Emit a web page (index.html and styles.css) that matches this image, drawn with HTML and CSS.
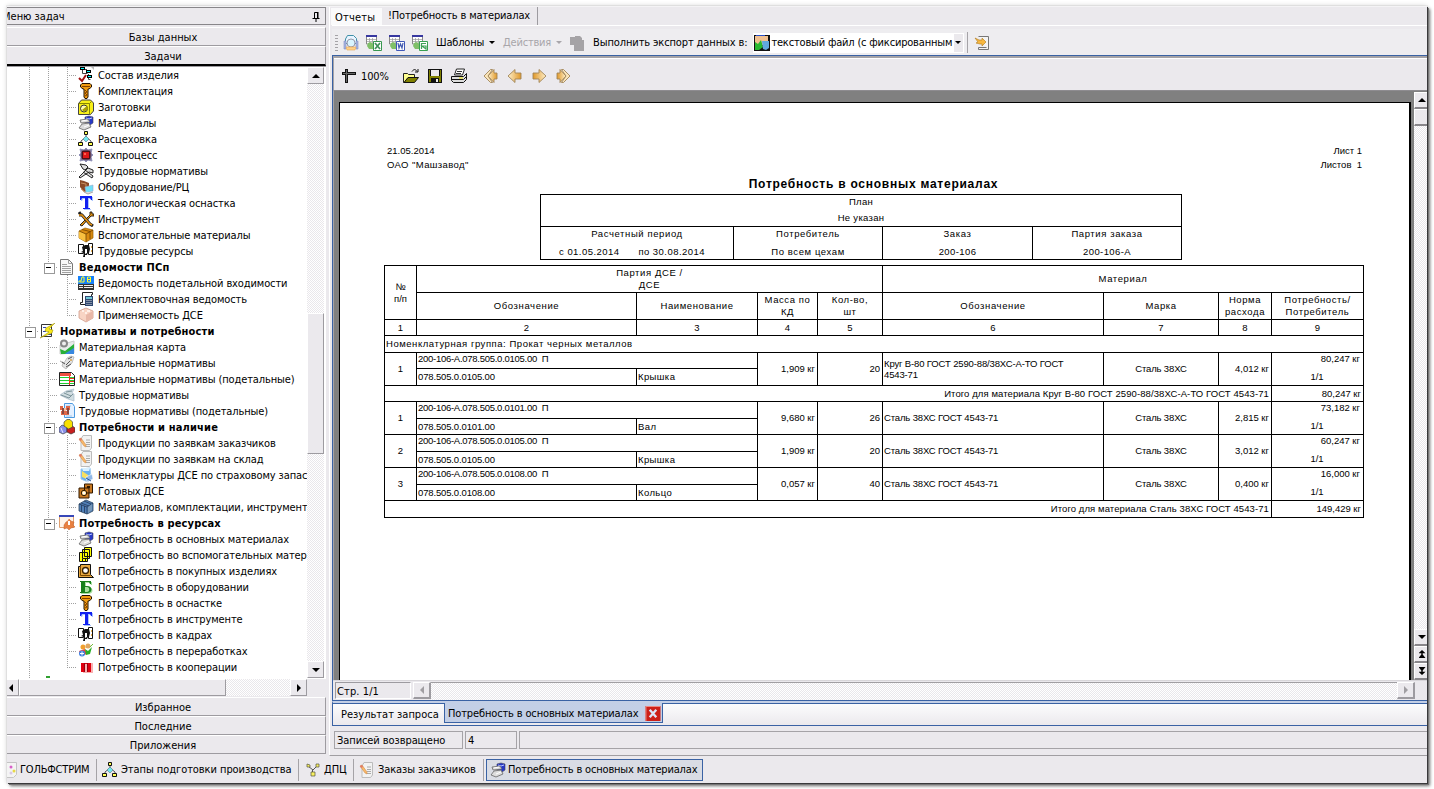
FILE: index.html
```html
<!DOCTYPE html>
<html lang="ru">
<head>
<meta charset="utf-8">
<title>Потребность в материалах</title>
<link rel="stylesheet" href="styles.css">
</head>
<body>
<svg class="sprite" xmlns="http://www.w3.org/2000/svg">
<symbol id="i-struct" viewBox="0 0 16 16"><path d="M4.500 3v3.500h5M10.500 7v5.500h2M6 2.500h3" stroke="#444" fill="none"/><path d="M2 0h5v3H2zM8 3h5v3H8zM9 8h5v3H9z" fill="#000"/><path d="M3 1h3v1H3zM9 4h3v1H9zM10 9h3v1h-3z" fill="#0ff"/><path d="M1 11l3 3 4-6" stroke="#a01010" stroke-width="2" fill="none"/><path d="M13 0h3v3z" fill="#bbb"/></symbol>
<symbol id="i-bolt" viewBox="0 0 16 16"><path d="M4 .5h8l1.500 1.500v2L11 6h-1v8l-1 1.500H7L6 14V6H5L2.500 4V2z" fill="#f09a10" stroke="#201000"/><path d="M4 3.500h8M7 7l2 2-2 1 2 2-2 1" stroke="#804000" fill="none"/></symbol>
<symbol id="i-nut" viewBox="0 0 16 16"><path d="M.5 4.500l3-3.500h9l3 3v8l-3 3.500h-12z" fill="#f8f018" stroke="#444"/><path d="M.5 4.500h11v11M11.500 4.500l2-2" stroke="#888800" fill="none"/><circle cx="6" cy="9.500" r="3.500" fill="#fffbb0" stroke="#333"/><path d="M4 11a3 3 0 0 0 5-4z" fill="#a8a000"/></symbol>
<symbol id="i-mat" viewBox="0 0 16 16"><path d="M7 2l4-1 4 1v6l-3 2-5-3z" fill="#2638c8" stroke="#445" stroke-width=".6"/><path d="M8 3l3 1 3-1" stroke="#b8c4ff" fill="none"/><path d="M2 5l8-1 2 3-9 1zM4 9l7-1 2 4-7 3-5-2z" fill="#ddd" stroke="#666" stroke-width=".8"/><path d="M4 6l5-1M6 12l5-2" stroke="#fff"/></symbol>
<symbol id="i-route" viewBox="0 0 16 16"><path d="M8 4v3M3 12v-2l5-4 5 4v2" stroke="#555" fill="none"/><path d="M6.500.5h3v3h-3zM.5 11.500h4v3h-4zM10.500 11.500h4v3h-4z" fill="#ffff50" stroke="#111"/><path d="M8 5l3 3-3 3-3-3z" fill="#70e8f0" stroke="#567" stroke-width=".5"/></symbol>
<symbol id="i-tech" viewBox="0 0 16 16"><path d="M8 1l2 2 4-1-1 4 2 2-2 2 1 4-4-1-2 2-2-2-4 1 1-4-2-2 2-2-1-4 4 1z" fill="#807898" stroke="#9090b8"/><rect x="3.500" y="3.500" width="9" height="9" rx="2" fill="#501018"/><rect x="5" y="5" width="6" height="6" fill="#e01818"/><rect x="6" y="6" width="2" height="2" fill="#ff6050"/></symbol>
<symbol id="i-hammer" viewBox="0 0 16 16"><path d="M2 1l6 1 2 2-3 3-2-1zM7 7l8 6-1 2-9-6M10 5l5 2v3l-4-1-9 6-1-1z" fill="#ddd" stroke="#111" stroke-width=".9"/></symbol>
<symbol id="i-equip" viewBox="0 0 16 16"><path d="M2 1l4 1 5 2v8l-5 1-4-5z" fill="#8a4a28"/><path d="M3 4l5 1v6M3 10l4 3" stroke="#c89060" fill="none"/><path d="M7 8l8-2v6l-7 2z" fill="#70e0f8" stroke="#9ac" stroke-width=".6"/><path d="M6 13l4 2 5-2" fill="#ddd" stroke="#aaa"/></symbol>
<symbol id="i-t" viewBox="0 0 16 16"><path d="M3 2v4h1l1-2h3v10H6v1h7v-1h-2V4h2l1 2h1V2z" fill="#a8c4ff"/><path d="M2 1v4h1l1-2h3v10H5v1h7v-1h-2V3h2l1 2h1V1z" fill="#1020f0"/></symbol>
<symbol id="i-tool" viewBox="0 0 16 16"><path d="M2 14L12 4V1h2v2h2v2h-3L4 15z" fill="#f09a10" stroke="#111" stroke-width=".9"/><path d="M1 1l2 3M1 4h3l8 9 3 2" stroke="#222" stroke-width="3" fill="none"/><path d="M1 4h3l8 9 2 1" stroke="#e59010" stroke-width="1.600" fill="none"/></symbol>
<symbol id="i-box" viewBox="0 0 16 16"><path d="M1 4l6-3 8 2v8l-7 4-7-4z" fill="#d88a10" stroke="#9a6000" stroke-width=".7"/><path d="M1 4l7 3v8l-7-4z" fill="#f8c040"/><path d="M1 4l7 3 7-4M8 7v8M4 2.500l8 2V12" stroke="#704000" stroke-width=".8" fill="none"/></symbol>
<symbol id="i-people" viewBox="0 0 16 16"><path d="M.5 1.500h5v9h-5zM10.500 .5h4v11h-4z" fill="#fff" stroke="#111"/><path d="M4 4l3-2h4l1 4-1 4-2 1 1 3H5l1-4-3-1 2-1z" fill="#111"/><path d="M7 6h2v4l-2 1zM7 12h3v2H7z" fill="#fff"/><path d="M13 3h1v2h-1zM13 7h1v2h-1z" fill="#e8b050"/></symbol>
<symbol id="i-doc" viewBox="0 0 16 16"><path d="M1.500.5h8l4 4v11h-12z" fill="#f8f8f8" stroke="#777"/><path d="M9.500.5v4h4M3 5.500h5M3 7.500h9M3 9.500h9M3 11.500h9M3 13.500h9" stroke="#a0a0a0" fill="none"/></symbol>
<symbol id="i-dv" viewBox="0 0 16 16"><path d="M0 1h16v8H0z" fill="#1680f8"/><path d="M2 7h4V2H4L3 6H1v1.500M9.500 2v5h3V2h-3m0 2.500h3" stroke="#ffff30" fill="none"/><path d="M0 9h16v6H0z" fill="#333"/><path d="M1 10.500h4M1 12.500h4M6 10.500h9M6 12.500h9" stroke="#eee"/></symbol>
<symbol id="i-calc" viewBox="0 0 16 16"><path d="M4.500 1.500h10v2h-1v10h-11v-2h2z" fill="#fff" stroke="#222"/><rect x="7" y="5" width="8" height="10" fill="#304870"/><path d="M8 6h6v2H8z" fill="#70c8d8"/><path d="M8.500 9.500h5M8.500 11.500h5M8.500 13.500h5" stroke="#ddd" stroke-dasharray="1 1"/></symbol>
<symbol id="i-brick" viewBox="0 0 16 16"><path d="M1 4l7-3 7 3v7l-7 4-7-4z" fill="#f8d4c4" stroke="#d09c8c" stroke-width=".8"/><path d="M8 8l7-4v7l-7 4z" fill="#e8b8a8"/><path d="M4 3h2v2H4zM9 3h3v2H9zM7 5h2v2H7z" fill="#fff0e8"/></symbol>
<symbol id="i-norm" viewBox="0 0 16 16"><path d="M1.500 1.500h10v12h-10z" fill="#fff" stroke="#333"/><path d="M3 4h3v1H3zM3 8h3v1H3zM8 8h3v1H8zM8 11h3v1H8z" fill="#3048b0"/><path d="M15 0L6 5l-1 3 4 1-9 6 12-5 1-3-4-1z" fill="#f8e818" stroke="#968a00" stroke-width=".5"/></symbol>
<symbol id="i-map" viewBox="0 0 16 16"><path d="M1 6l14-4v12L1 15z" fill="#e8ecea" stroke="#ccc"/><circle cx="5" cy="4.500" r="3" fill="#eee" stroke="#888" stroke-width="2"/><path d="M1 10l5 2 9-7v6l-6 4H2z" fill="#28b038"/><path d="M7 14l8-5v6H6z" fill="#3888e0"/></symbol>
<symbol id="i-sheets" viewBox="0 0 16 16"><path d="M1 6l4 2 3-5 4-2 3 1-2 6-6 6-4-3 1-3z" fill="#e4e4e4" stroke="#aaa" stroke-width=".7"/><path d="M3 7l3 2M9 4l4-2M7 10l4-4M7 12l5-3" stroke="#555"/><path d="M11 4h2v2h-2z" fill="#d8b070"/></symbol>
<symbol id="i-table" viewBox="0 0 16 16"><path d="M.5 1.500h12l3 3v10H.5z" fill="#fff" stroke="#222"/><path d="M1 2h11v3H1z" fill="#f05040"/><path d="M1 6.500h14M1 9.500h14M1 12.500h14" stroke="#20d030"/><path d="M10.500 5v9M11 7.500h4M11 10.500h4" stroke="#f03020"/></symbol>
<symbol id="i-sheaf" viewBox="0 0 16 16"><path d="M1 8l6-4 8-2-2 4 2 1v7l-6-2z" fill="#d0dce0" stroke="#abc" stroke-width=".7"/><path d="M2 8l8 3 4-4M5 6l7 3M7 5l6-1" stroke="#668088" stroke-width=".8" fill="none"/></symbol>
<symbol id="i-people2" viewBox="0 0 16 16"><path d="M5.500.5h8l2 3v11h-10z" fill="#e4f0ff" stroke="#4c9ae0"/><path d="M7 3h5M7 13h6" stroke="#9cc8f0"/><path d="M1 3h3v4H1zM7 3h4v4H7zM2 8h8v4H2z" fill="#e06848"/><path d="M3 5h2v6H3zM8 5h2v6H8z" fill="#884840"/><path d="M5 5h2v3H5z" fill="#f8c0a0"/></symbol>
<symbol id="i-cubes" viewBox="0 0 16 16"><path d="M0 9l3-3 5 2v5l-4 2-4-2z" fill="#8890e8" stroke="#444" stroke-width=".7"/><path d="M8 9l4-3 4 3v4l-4 2-4-2z" fill="#c82020" stroke="#333" stroke-width=".7"/><path d="M5 3l3-2.500h3L13.500 3v5l-4 2L5 7z" fill="#f8e000" stroke="#444" stroke-width=".7"/><path d="M2 9l2 5" stroke="#e0e4ff"/></symbol>
<symbol id="i-note" viewBox="0 0 16 16"><path d="M5 .5h8.500V13l-2 2.500H3V4z" fill="#f2f2f2" stroke="#bbb"/><path d="M8 5h4M8 7.500h4M8 9.500h4M8 11.500h4" stroke="#aaa"/><path d="M1 4l2-1 5 7v2l-2-1z" fill="#f8b868" stroke="#c88040" stroke-width=".5"/><path d="M1 4l2-1 1 2-2 1z" fill="#e07868"/></symbol>
<symbol id="i-pen" viewBox="0 0 16 16"><path d="M3 2l9-1 1 9-3 5-7-3z" fill="#68b0f0" stroke="#9cc8f0"/><path d="M4 1h8l-1 3H5z" fill="#d8f0ff"/><path d="M4 4l6 4 1 5-7-3z" fill="#f8e060"/><path d="M8 10l6-3 1 5-6 3z" fill="#90b8e8" stroke="#fff" stroke-width=".6"/><path d="M8 11l5 3" stroke="#2858a0"/></symbol>
<symbol id="i-ready" viewBox="0 0 16 16"><path d="M6.500 1h8v9h-8zM1 5h10v10H1z" fill="#c87820" stroke="#301800"/><circle cx="6" cy="10" r="2.700" fill="#ffe0a0" stroke="#301800"/><path d="M9 3h3v2H9z" fill="#301800"/><path d="M5 9h2v2H5z" fill="#fff"/></symbol>
<symbol id="i-bluebox" viewBox="0 0 16 16"><path d="M1 5l7-4 7 3v8l-6 3-8-3z" fill="#5080b8" stroke="#304860" stroke-width=".8"/><path d="M1 5l8 3 6-4M9 8v7M3.500 6v7M6.500 7v7M3 4l8 3M6 2l7 3" stroke="#243858" stroke-width=".8" fill="none"/><path d="M10 8l4-3v6l-4 3z" fill="#7898b8"/></symbol>
<symbol id="i-win" viewBox="0 0 16 16"><path d="M.5.5h14v12H.5z" fill="#fff4e8" stroke="#e0a070"/><path d="M0 0h15v2H0z" fill="#3848b8"/><path d="M5 10l2-3 2-1 1-2 2 2 3 1-1 3 2 2-4 1-2 2-2-2-3 1z" fill="#e88040" stroke="#c06030" stroke-width=".5"/><path d="M9 6h2v4H9z" fill="#fff"/></symbol>
<symbol id="i-copy" viewBox="0 0 16 16"><path d="M6.500.5h7v9h-7zM4.500 2.500h7v9h-7zM1.500 5.500h8v9h-8z" fill="#ffff00" stroke="#111"/><path d="M4 12h1v2H4zM7 12h1v2H7z" fill="#111"/></symbol>
<symbol id="i-buy" viewBox="0 0 16 16"><path d="M.5 3.500h2v-2h10v10l3 3H.5z" fill="#e8a840" stroke="#111"/><path d="M2.500 3v9.500h10" stroke="#7a4800" fill="none"/><circle cx="7.500" cy="7.500" r="3" fill="#fff" stroke="#382000" stroke-width="1.300"/></symbol>
<symbol id="i-b" viewBox="0 0 16 16"><path d="M3 3v1h1v10H3v1h7c6 0 6-7 0-7H8V4h4l1 2h1V3z" fill="#a8e0a0"/><path fill-rule="evenodd" d="M2 2v1h1v10H2v1h7c6 0 6-7 0-7H7V3h4l1 2h1V2zM7 8h2c3 0 3 5 0 5H7z" fill="#18801c"/></symbol>
<symbol id="i-rework" viewBox="0 0 16 16"><circle cx="5" cy="4" r="2.500" fill="#f0a030"/><circle cx="10" cy="3" r="2.500" fill="#e0a860"/><path d="M1 8l6-2 2 5-6 2z" fill="#f04040"/><path d="M7 6l3 2 4-4-2 7-4 1z" fill="#28b028"/><circle cx="4" cy="10.500" r="3" fill="#4080e0"/><path d="M2 10.500h4M4 8.500v4" stroke="#fff"/><path d="M12 4l3-3" stroke="#70c040"/></symbol>
<symbol id="i-p" viewBox="0 0 16 16"><path d="M5 4h10v10H5z" fill="#f8b0b0"/><path d="M3 4h10v9H9V5H7v8H3z" fill="#e00010"/><path d="M9 4h1v9H9zM6 4h1v9H6z" fill="#980010"/></symbol>
<symbol id="i-preview" viewBox="0 0 16 16"><path d="M4.500.5h6l3 3v5h-11V4z" fill="#e8f4ff" stroke="#4090a8"/><path d="M1 6h2v8H1zM13 6h2v8h-2z" fill="#a8b4e0" stroke="#8090c8" stroke-width=".6"/><circle cx="8" cy="8" r="4" fill="#d8f4ff" stroke="#99a"/><path d="M3 12h10l-1 3H4z" fill="#ffd088" stroke="#e8a850" stroke-width=".6"/></symbol>
<symbol id="i-exp" viewBox="0 0 16 16"><path d="M.5 1h10v8H.5z" fill="#fff" stroke="#888"/><path d="M0 0h11v2H0z" fill="#3838a0"/><path d="M1 4.500h9M1 6.500h9M3.500 3v6M6.500 3v6" stroke="#999" stroke-width=".7"/><path d="M2 8l3-1 3 3-1 4H3l-2-3z" fill="#80c068"/></symbol>
<symbol id="i-xl" viewBox="0 0 16 16"><use href="#i-exp"/><path d="M7.500 6.500h8v9h-8z" fill="#fff" stroke="#389850"/><path d="M9 8l5 6M14 8l-5 6" stroke="#40905a" stroke-width="1.700"/></symbol>
<symbol id="i-wd" viewBox="0 0 16 16"><use href="#i-exp"/><path d="M7.500 6.500h8v9h-8z" fill="#fff" stroke="#4058b8"/><path d="M9 8l1 5 1.500-4 1.500 4 1-5" stroke="#4058b0" stroke-width="1.200" fill="none"/></symbol>
<symbol id="i-gf" viewBox="0 0 16 16"><use href="#i-exp"/><path d="M7.500 6.500h8v9h-8z" fill="#fff" stroke="#38a050"/><path d="M9.500 14V8.500H14M10 11l4 3v-3z" stroke="#40a058" stroke-width="1.200" fill="none"/></symbol>
<symbol id="i-off" viewBox="0 0 16 16"><path d="M1 2h5V1h5l2 2v2h2v11H5v-6H1z" fill="#a5a3a6"/></symbol>
<symbol id="i-pic" viewBox="0 0 16 16"><path d="M0 0h16v16H0z" fill="#111"/><path d="M1 1h13v9H1z" fill="#f0c090"/><path d="M2 0h9v1H2z" fill="#2850c8"/><path d="M1 7l3 2 3-4 2 7-4 3H1z" fill="#28b830"/><path d="M8 6h7v7l-3 2-3-1z" fill="#60a8e0"/></symbol>
<symbol id="i-go" viewBox="0 0 16 16"><path d="M4.500 1.500h10v13h-10v-2h8" fill="#f4f4f4" stroke="#777"/><path d="M1 3l4 2h3V3l4 4-4 4V9H6L2 8l2-1z" fill="#f8b840" stroke="#b07818" stroke-width=".6"/></symbol>
<symbol id="i-cross" viewBox="0 0 16 16"><path d="M4 1h3v14H4zM1 4h14v3H1z" fill="#111"/><path d="M5 2h1v12H5zM2 5h12v1H2z" fill="#666"/></symbol>
<symbol id="i-open" viewBox="0 0 16 16"><path d="M.5 5.500h4l1 1h6v3h-6l-4 5h-1z" fill="#ffff90" stroke="#222"/><path d="M5 9.500h10.500l-4 5H1z" fill="#808000" stroke="#111"/><path d="M9 3.500c2-3 4-2 5 0M12 4h3V1" stroke="#111" fill="none"/></symbol>
<symbol id="i-save" viewBox="0 0 16 16"><path d="M1 1h14v14H1z" fill="#111"/><path d="M2 2h1v6h10V2h1v12H2z" fill="#808000"/><path d="M4 2h8v6H4z" fill="#ebe9ed"/><path d="M4 10h8v5H4z" fill="#111"/><path d="M9 11h2v3H9z" fill="#eee"/></symbol>
<symbol id="i-print" viewBox="0 0 16 16"><path d="M5.500 1h8l-2 6h-8z" fill="#fff" stroke="#111" stroke-width=".9"/><path d="M6 3.500h5M5 5.500h5" stroke="#333"/><path d="M.5 8.500h12l3-3v6l-3 3h-10l-2-2z" fill="#ddd" stroke="#111"/><path d="M1 11.500h11.500l3-3" stroke="#111" fill="none"/><path d="M8 9.500h4v1H8z" fill="#e8e000"/></symbol>
<linearGradient id="gold" x1="0" x2="1"><stop offset="0" stop-color="#fff0cc"/><stop offset="1" stop-color="#e09828"/></linearGradient>
<linearGradient id="gold2" x1="1" x2="0"><stop offset="0" stop-color="#fff0cc"/><stop offset="1" stop-color="#e09828"/></linearGradient>
<symbol id="i-prev" viewBox="0 0 16 16"><path d="M1 8l7-6.500V5h6v6H8v3.500z" fill="url(#gold)" stroke="#a08458" stroke-width=".9"/></symbol>
<symbol id="i-next" viewBox="0 0 16 16"><path d="M15 8L8 1.500V5H2v6h6v3.500z" fill="url(#gold2)" stroke="#a08458" stroke-width=".9"/></symbol>
<symbol id="i-first" viewBox="0 0 16 16"><path d="M5 8l6-6.500V5h3v6h-3v3.500z" fill="url(#gold)" stroke="#a08458" stroke-width=".9"/><path d="M1 8l6.500-6.500h2L5 8l4.500 6.500h-2z" fill="#fbe6bc" stroke="#a08458" stroke-width=".9"/></symbol>
<symbol id="i-last" viewBox="0 0 16 16"><path d="M11 8L5 1.500V5H2v6h3v3.500z" fill="url(#gold2)" stroke="#a08458" stroke-width=".9"/><path d="M15 8L8.500 1.500h-2L11 8l-4.500 6.500h2z" fill="#fbe6bc" stroke="#a08458" stroke-width=".9"/></symbol>
<symbol id="i-golf" viewBox="0 0 16 16"><path d="M-2 .5h14.500v12l-3 3H-2z" fill="#f4f4f4" stroke="#c4c4c4"/><circle cx="7" cy="5" r="1.500" fill="#d860c8"/><circle cx="10" cy="9" r="1.500" fill="#e8d848"/><circle cx="7" cy="11" r="1.500" fill="#d8c8e8"/></symbol>
<symbol id="i-dpc" viewBox="0 0 16 16"><path d="M3 4l5 4 4-4M7.500 8v4" stroke="#555" fill="none"/><path d="M2 2l3 1v2H2zM11 2h3v3h-3zM6 10h4v4H6z" fill="#f8f060" stroke="#554" stroke-width=".7"/></symbol>
<symbol id="i-pin" viewBox="0 0 10 10"><path d="M3.500.5h3v6h-3zM1.500 6.500h7M5 7v3" stroke="#000" fill="none"/><path d="M6 0h1.500v6H6z"/></symbol>
</svg>

<div class="window">
 <div class="work">
  <aside class="side">
   <div class="side-head"><span>Меню задач</span><svg class="pin"><use href="#i-pin"/></svg></div>
   <div class="bar first">Базы данных</div>
   <div class="bar open">Задачи</div>
   <div class="tree-wrap">
    <div class="tree">
     <div class="row"><i class="g v"></i><i class="g v"></i><i class="g t"></i><svg class="ic"><use href="#i-struct"/></svg><span>Состав изделия</span></div>
     <div class="row"><i class="g v"></i><i class="g v"></i><i class="g t"></i><svg class="ic"><use href="#i-bolt"/></svg><span>Комплектация</span></div>
     <div class="row"><i class="g v"></i><i class="g v"></i><i class="g t"></i><svg class="ic"><use href="#i-nut"/></svg><span>Заготовки</span></div>
     <div class="row"><i class="g v"></i><i class="g v"></i><i class="g t"></i><svg class="ic"><use href="#i-mat"/></svg><span>Материалы</span></div>
     <div class="row"><i class="g v"></i><i class="g v"></i><i class="g t"></i><svg class="ic"><use href="#i-route"/></svg><span>Расцеховка</span></div>
     <div class="row"><i class="g v"></i><i class="g v"></i><i class="g t"></i><svg class="ic"><use href="#i-tech"/></svg><span>Техпроцесс</span></div>
     <div class="row"><i class="g v"></i><i class="g v"></i><i class="g t"></i><svg class="ic"><use href="#i-hammer"/></svg><span>Трудовые нормативы</span></div>
     <div class="row"><i class="g v"></i><i class="g v"></i><i class="g t"></i><svg class="ic"><use href="#i-equip"/></svg><span>Оборудование/РЦ</span></div>
     <div class="row"><i class="g v"></i><i class="g v"></i><i class="g t"></i><svg class="ic"><use href="#i-t"/></svg><span>Технологическая оснастка</span></div>
     <div class="row"><i class="g v"></i><i class="g v"></i><i class="g t"></i><svg class="ic"><use href="#i-tool"/></svg><span>Инструмент</span></div>
     <div class="row"><i class="g v"></i><i class="g v"></i><i class="g t"></i><svg class="ic"><use href="#i-box"/></svg><span>Вспомогательные материалы</span></div>
     <div class="row"><i class="g v"></i><i class="g v"></i><i class="g l"></i><svg class="ic"><use href="#i-people"/></svg><span>Трудовые ресурсы</span></div>
     <div class="row group"><i class="g v"></i><i class="g l box"></i><svg class="ic"><use href="#i-doc"/></svg><span>Ведомости ПСп</span></div>
     <div class="row"><i class="g v"></i><i class="g"></i><i class="g t"></i><svg class="ic"><use href="#i-dv"/></svg><span>Ведомость подетальной входимости</span></div>
     <div class="row"><i class="g v"></i><i class="g"></i><i class="g t"></i><svg class="ic"><use href="#i-calc"/></svg><span>Комплектовочная ведомость</span></div>
     <div class="row"><i class="g v"></i><i class="g"></i><i class="g l"></i><svg class="ic"><use href="#i-brick"/></svg><span>Применяемость ДСЕ</span></div>
     <div class="row group"><i class="g t box"></i><svg class="ic"><use href="#i-norm"/></svg><span>Нормативы и потребности</span></div>
     <div class="row"><i class="g v"></i><i class="g t"></i><svg class="ic"><use href="#i-map"/></svg><span>Материальная карта</span></div>
     <div class="row"><i class="g v"></i><i class="g t"></i><svg class="ic"><use href="#i-sheets"/></svg><span>Материальные нормативы</span></div>
     <div class="row"><i class="g v"></i><i class="g t"></i><svg class="ic"><use href="#i-table"/></svg><span>Материальные нормативы (подетальные)</span></div>
     <div class="row"><i class="g v"></i><i class="g t"></i><svg class="ic"><use href="#i-sheaf"/></svg><span>Трудовые нормативы</span></div>
     <div class="row"><i class="g v"></i><i class="g t"></i><svg class="ic"><use href="#i-people2"/></svg><span>Трудовые нормативы (подетальные)</span></div>
     <div class="row group"><i class="g v"></i><i class="g t box"></i><svg class="ic"><use href="#i-cubes"/></svg><span>Потребности и наличие</span></div>
     <div class="row"><i class="g v"></i><i class="g v"></i><i class="g t"></i><svg class="ic"><use href="#i-note"/></svg><span>Продукции по заявкам заказчиков</span></div>
     <div class="row"><i class="g v"></i><i class="g v"></i><i class="g t"></i><svg class="ic"><use href="#i-note"/></svg><span>Продукции по заявкам на склад</span></div>
     <div class="row"><i class="g v"></i><i class="g v"></i><i class="g t"></i><svg class="ic"><use href="#i-pen"/></svg><span>Номенклатуры ДСЕ по страховому запасу</span></div>
     <div class="row"><i class="g v"></i><i class="g v"></i><i class="g t"></i><svg class="ic"><use href="#i-ready"/></svg><span>Готовых ДСЕ</span></div>
     <div class="row"><i class="g v"></i><i class="g v"></i><i class="g l"></i><svg class="ic"><use href="#i-bluebox"/></svg><span>Материалов, комплектации, инструмента</span></div>
     <div class="row group"><i class="g v"></i><i class="g l box"></i><svg class="ic"><use href="#i-win"/></svg><span>Потребность в ресурсах</span></div>
     <div class="row"><i class="g v"></i><i class="g"></i><i class="g t"></i><svg class="ic"><use href="#i-mat"/></svg><span>Потребность в основных материалах</span></div>
     <div class="row"><i class="g v"></i><i class="g"></i><i class="g t"></i><svg class="ic"><use href="#i-copy"/></svg><span>Потребность во вспомогательных материалах</span></div>
     <div class="row"><i class="g v"></i><i class="g"></i><i class="g t"></i><svg class="ic"><use href="#i-buy"/></svg><span>Потребность в покупных изделиях</span></div>
     <div class="row"><i class="g v"></i><i class="g"></i><i class="g t"></i><svg class="ic"><use href="#i-b"/></svg><span>Потребность в оборудовании</span></div>
     <div class="row"><i class="g v"></i><i class="g"></i><i class="g t"></i><svg class="ic"><use href="#i-bolt"/></svg><span>Потребность в оснастке</span></div>
     <div class="row"><i class="g v"></i><i class="g"></i><i class="g t"></i><svg class="ic"><use href="#i-t"/></svg><span>Потребность в инструменте</span></div>
     <div class="row"><i class="g v"></i><i class="g"></i><i class="g t"></i><svg class="ic"><use href="#i-people"/></svg><span>Потребность в кадрах</span></div>
     <div class="row"><i class="g v"></i><i class="g"></i><i class="g t"></i><svg class="ic"><use href="#i-rework"/></svg><span>Потребность в переработках</span></div>
     <div class="row"><i class="g v"></i><i class="g"></i><i class="g l"></i><svg class="ic"><use href="#i-p"/></svg><span>Потребность в кооперации</span></div>
     <div class="row"><i class="g v"></i><i class="peek"></i></div>
    </div>
    <div class="vscroll"><b class="btn up"></b><b class="track tr1"></b><b class="thumb"></b><b class="track tr2"></b><b class="btn down"></b></div>
   </div>
   <div class="hscroll"><b class="btn left"></b><b class="hthumb"></b><b class="track grow"></b><b class="btn right"></b><b class="corner"></b></div>
   <div class="bar first">Избранное</div>
   <div class="bar">Последние</div>
   <div class="bar">Приложения</div>
  </aside>

  <main class="main">
   <div class="tabs"><span class="tab">Отчеты</span><span class="tab cur">!Потребность в материалах</span></div>
   <div class="toolbar">
    <i class="grip"></i>
    <svg class="ic b1"><use href="#i-preview"/></svg><svg class="ic b2"><use href="#i-xl"/></svg><svg class="ic b2"><use href="#i-wd"/></svg><svg class="ic b2"><use href="#i-gf"/></svg>
    <span class="menu">Шаблоны</span><i class="arr"></i>
    <span class="menu off">Действия</span><i class="arr off"></i>
    <svg class="ic b3"><use href="#i-off"/></svg>
    <span class="menu exp">Выполнить экспорт данных в:</span>
    <div class="combo"><svg class="ic"><use href="#i-pic"/></svg><span>текстовый файл (с фиксированным</span><b class="drop"><i class="arr"></i></b></div>
    <i class="sep"></i><svg class="ic b4"><use href="#i-go"/></svg>
   </div>
   <div class="viewer">
    <div class="ptools">
     <svg class="ic"><use href="#i-cross"/></svg><span>100%</span>
     <svg class="ic p1"><use href="#i-open"/></svg><svg class="ic p2"><use href="#i-save"/></svg><svg class="ic p2"><use href="#i-print"/></svg>
     <svg class="ic p3"><use href="#i-first"/></svg><svg class="ic p2"><use href="#i-prev"/></svg><svg class="ic p2"><use href="#i-next"/></svg><svg class="ic p2"><use href="#i-last"/></svg>
    </div>
    <div class="canvas">
     <div class="page">
      <div class="phead"><div>21.05.2014<br><span class="w1">ОАО "Машзавод"</span></div><div class="ra">Лист 1<br>Листов&nbsp; 1</div></div>
      <h1>Потребность в основных материалах</h1>
      <div class="info">
       <div class="plan"><span>План</span><span>Не указан</span></div>
       <div><span class="wide">Расчетный период</span><span class="period"><em>с 01.05.2014</em><em>по 30.08.2014</em></span></div>
       <div><span class="wide">Потребитель</span><span class="wide">По всем цехам</span></div>
       <div><span class="wide">Заказ</span><span class="code">200-106</span></div>
       <div><span class="wide">Партия заказа</span><span class="code">200-106-А</span></div>
      </div>
      <div class="grid">
       <div class="r2 nn">№<br>п/п</div><div class="c4 wide">Партия ДСЕ /<br>ДСЕ</div><div class="c4b wide">Материал</div>
       <div class="wide">Обозначение</div><div class="wide">Наименование</div><div class="wide">Масса по<br>КД</div><div class="wide">Кол-во,<br>шт</div><div class="wide">Обозначение</div><div class="wide">Марка</div><div class="wide">Норма<br>расхода</div><div class="wide">Потребность/<br>Потребитель</div>
       <div>1</div><div>2</div><div>3</div><div>4</div><div>5</div><div>6</div><div>7</div><div>8</div><div>9</div>
       <div class="all lf ng">Номенклатурная группа: Прокат черных металлов</div>

       <div class="r2">1</div><div class="c2 lf batch">200-106-А.078.505.0.0105.00&nbsp; П</div><div class="r2 rt">1,909 кг</div><div class="r2 rt">20</div><div class="r2 lf mat">Круг В-80 ГОСТ 2590-88/38ХС-А-ТО ГОСТ<br>4543-71</div><div class="r2 grade">Сталь 38ХС</div><div class="r2 rt">4,012 кг</div><div class="r2 need"><span>80,247 кг</span><em>1/1</em></div>
       <div class="lf">078.505.0.0105.00</div><div class="lf nm">Крышка</div>
       <div class="c8 rt tot">Итого для материала Круг В-80 ГОСТ 2590-88/38ХС-А-ТО ГОСТ 4543-71</div><div class="rt sum">80,247 кг</div>

       <div class="r2">1</div><div class="c2 lf batch">200-106-А.078.505.0.0101.00&nbsp; П</div><div class="r2 rt">9,680 кг</div><div class="r2 rt">26</div><div class="r2 lf">Сталь 38ХС ГОСТ 4543-71</div><div class="r2 grade">Сталь 38ХС</div><div class="r2 rt">2,815 кг</div><div class="r2 need"><span>73,182 кг</span><em>1/1</em></div>
       <div class="lf">078.505.0.0101.00</div><div class="lf nm">Вал</div>

       <div class="r2">2</div><div class="c2 lf batch">200-106-А.078.505.0.0105.00&nbsp; П</div><div class="r2 rt">1,909 кг</div><div class="r2 rt">20</div><div class="r2 lf">Сталь 38ХС ГОСТ 4543-71</div><div class="r2 grade">Сталь 38ХС</div><div class="r2 rt">3,012 кг</div><div class="r2 need"><span>60,247 кг</span><em>1/1</em></div>
       <div class="lf">078.505.0.0105.00</div><div class="lf nm">Крышка</div>

       <div class="r2">3</div><div class="c2 lf batch">200-106-А.078.505.0.0108.00&nbsp; П</div><div class="r2 rt">0,057 кг</div><div class="r2 rt">40</div><div class="r2 lf">Сталь 38ХС ГОСТ 4543-71</div><div class="r2 grade">Сталь 38ХС</div><div class="r2 rt">0,400 кг</div><div class="r2 need"><span>16,000 кг</span><em>1/1</em></div>
       <div class="lf">078.505.0.0108.00</div><div class="lf nm">Кольцо</div>
       <div class="c8 rt tot">Итого для материала Сталь 38ХС ГОСТ 4543-71</div><div class="rt sum">149,429 кг</div>
      </div>
     </div>
     <div class="pscroll"><b class="cbtn up"></b><b class="cbtn"></b><b class="track grow"></b><b class="cbtn down"></b><b class="cbtn dup"></b><b class="cbtn ddown"></b></div>
    </div>
    <div class="pstatus"><span class="pg">Стр. 1/1</span><b class="rbtn left"></b><b class="track grow"></b><b class="rbtn right"></b><i class="endcap"></i></div>
   </div>
   <div class="rtabs"><span class="rt1">Результат запроса</span><span class="rt2">Потребность в основных материалах<svg class="close" viewBox="0 0 16 16"><rect width="16" height="16" fill="#cc2018"/><path d="M0 0h16v1H0zM0 0h1v16H0z" fill="#ee8880"/><path d="M4.500 4l7 8M11.500 4l-7 8" stroke="#dce6f8" stroke-width="2.500"/></svg></span></div>
   <div class="status"><span class="s1">Записей возвращено</span><span class="s2">4</span><span class="s3"></span></div>
  </main>
 </div>
 <div class="taskbar">
  <span class="task k1"><svg class="ic"><use href="#i-golf"/></svg>ГОЛЬФСТРИМ</span>
  <span class="task k2"><svg class="ic"><use href="#i-route"/></svg>Этапы подготовки производства</span>
  <span class="task k3"><svg class="ic"><use href="#i-dpc"/></svg>ДПЦ</span>
  <span class="task k4"><svg class="ic"><use href="#i-note"/></svg>Заказы заказчиков</span>
  <span class="task k5"><svg class="ic"><use href="#i-mat"/></svg>Потребность в основных материалах</span>
 </div>
</div>
</body>
</html>
```

FILE: styles.css
```css
* { box-sizing: border-box; }
html, body { margin: 0; height: 100%; overflow: hidden; background: #fff; }
body { padding: 6px 0 0 7px; font: 11px/16px "DejaVu Sans Condensed", "DejaVu Sans", sans-serif; color: #000; letter-spacing: -0.12px; }
i, em { font-style: normal; }
.sprite { position: absolute; width: 0; height: 0; }
.ic { width: 16px; height: 16px; flex: none; display: block; }
.window { width: 1420px; height: 777px; background: #ebe9ed; display: flex; flex-direction: column;
  box-shadow: 0 0 0 1px rgba(0,0,0,.04), 1px 1px 0 #3c3c3e, 2px 2px 0 #777, 3px 3px 3px rgba(0,0,0,.55), 0 0 5px rgba(0,0,0,.2); border-top: 1px solid #f4f3f5; }
.work { display: flex; height: 749px; flex: none; }

/* left task menu */
.side { width: 320px; flex: none; display: flex; flex-direction: column; border-right: 1px solid #ebe9ed; }
.side-head { height: 18px; flex: none; border: 1px solid #88868a; border-left: 0; display: flex; justify-content: space-between; align-items: center; padding: 1px 4px 0 0; overflow: hidden; width: 319px; letter-spacing: 0; }
.side-head span { margin-left: -5px; }
.pin { width: 10px; height: 10px; }
.bar { height: 19px; flex: none; border-top: 1px solid #fff; border-bottom: 1px solid #9d9ba0; border-right: 1px solid #9d9ba0; text-align: center; line-height: 20px; padding-right: 6px; letter-spacing: 0; }
.bar.first { margin-top: 2px; }
.bar.open { border-bottom: 2px solid #000; height: 20px; }
.tree-wrap { display: flex; height: 613px; flex: none; border-top: 1px solid #9d9ba0; background: #fff; }
.tree { width: 300px; height: 612px; overflow: hidden; background: #fff; padding-left: 13px; }
.row { height: 16px; display: flex; white-space: nowrap; }
.row span { line-height: 18px; }
.row .ic { margin: 0 4px 0 1px; }
.row.group { font-weight: bold; letter-spacing: .16px; }
.g { width: 19px; height: 16px; flex: none; position: relative; background-repeat: no-repeat; }
.v { background: repeating-linear-gradient(#a0a0a0 0 1px, #fff 1px 2px) 9px 0 / 1px 16px no-repeat; }
.t { background: repeating-linear-gradient(#a0a0a0 0 1px, #fff 1px 2px) 9px 0 / 1px 16px no-repeat, repeating-linear-gradient(90deg, #a0a0a0 0 1px, #fff 1px 2px) 9px 8px / 10px 1px no-repeat; }
.l { background: repeating-linear-gradient(#a0a0a0 0 1px, #fff 1px 2px) 9px 0 / 1px 9px no-repeat, repeating-linear-gradient(90deg, #a0a0a0 0 1px, #fff 1px 2px) 9px 8px / 10px 1px no-repeat; }
.box::after { content: ""; position: absolute; left: 5px; top: 4px; width: 9px; height: 9px; border: 1px solid #999; background: linear-gradient(#000, #000) 1px 3px / 5px 1px no-repeat #fff; }
.peek { width: 4px; height: 2px; background: #30a030; margin: 1px 0 0 7px; }
.track { background: repeating-conic-gradient(#e9e7eb 0 25%, #fff 0 50%) 0 0 / 2px 2px; display: block; }
.grow { flex: 1; }
.vscroll { width: 17px; height: 611px; display: flex; flex-direction: column; background: #ebe9ed; }
.btn { width: 17px; height: 17px; flex: none; background: #ebe9ed; border: 1px solid #9d9ba0; border-top-color: #fff; border-left-color: #fff; display: flex; align-items: center; justify-content: center; }
.btn::after, .cbtn::after, .rbtn::after { content: ""; display: block; }
.up::after { border: 4px solid transparent; border-bottom-color: #000; border-top: 0; }
.down::after { border: 4px solid transparent; border-top-color: #000; border-bottom: 0; }
.left::after { border: 4px solid transparent; border-right-color: #000; border-left: 0; }
.right::after { border: 4px solid transparent; border-left-color: #000; border-right: 0; }
.tr1 { height: 229px; }
.thumb { height: 141px; background: #ebe9ed; border: 1px solid #9d9ba0; border-top-color: #fff; border-left-color: #fff; }
.tr2 { flex: 1; }
.hscroll { height: 17px; flex: none; display: flex; background: #ebe9ed; margin-bottom: -1px; }
.hscroll .left { width: 12px; justify-content: flex-start; border-left: 0; padding-left: 2px; }
.hthumb { width: 207px; background: #ebe9ed; border: 1px solid #9d9ba0; border-top-color: #fff; border-left-color: #fff; }
.corner { width: 19px; }

/* right side */
.main { flex: 1; margin-left: 2px; border-left: 1px solid #fff; border-bottom: 1px solid #a09ea2; width: 1098px; padding-left: 2px; }
.tabs { height: 19px; display: flex; border-bottom: 1px solid #fff; letter-spacing: .2px; }
.tab { width: 51px; background: #fafafb; margin: 1px 0 0 -1px; height: 17px; line-height: 19px; padding-left: 4px; }
.tab.cur { width: 156px; background: #ebe9ed; border-right: 1px solid #9d9ba0; margin: 0; height: 18px; line-height: 18px; padding-left: 6px; letter-spacing: -.15px; }
.toolbar { height: 29px; display: flex; align-items: center; padding: 1px 0 0 3px; background: #eeedf0; border-top: 3px solid #ebe9ed; white-space: nowrap; }
.grip { width: 3px; height: 16px; background: repeating-linear-gradient(#a5a3a7 0 1px, transparent 1px 3px); margin-right: 5px; }
.b2 { margin-left: 7px; }
.menu { margin-left: 8px; letter-spacing: -.2px; }
.menu.exp { letter-spacing: -.12px; }
.arr { width: 0; height: 0; border: 3px solid transparent; border-top-color: #000; border-bottom: 0; margin-left: 5px; flex: none; }
.off { color: #a8a6aa; }
.arr.off { border-top-color: #a8a6aa; }
.b3 { margin-left: 7px; }
.combo { height: 20px; width: 211px; background: #fff; display: flex; align-items: center; margin-left: 6px; padding-left: 1px; }
.combo span { width: 183px; margin-left: 1px; letter-spacing: -.18px; }
.drop { background: #ebe9ed; width: 9px; height: 18px; display: flex; align-items: center; }
.drop .arr { margin-left: 1px; }
.sep { width: 1px; height: 21px; background: #a5a3a7; margin: 0 6px 0 3px; }
.viewer { height: 646px; border-top: 1px solid #3a62a4; border-left: 1px solid #3a62a4; border-bottom: 1px solid #3a62a4; }
.ptools { height: 35px; border-top: 2px solid #a5a3a7; border-bottom: 1px solid #8e8c90; display: flex; align-items: center; padding: 4px 0 0 7px; box-shadow: inset 0 1px 0 #fff; border-left: 1px solid #a5a3a7; }
.ptools span { margin: 2px 0 0 4px; width: 30px; }
.p1 { margin-left: 12px; } .p2 { margin-left: 8px; } .p3 { margin-left: 16px; }
.canvas { height: 589px; background: #808080; display: flex; justify-content: space-between; border-left: 1px solid #a5a3a7; padding-left: 5px; overflow: hidden; }
.page { margin-top: 11px; width: 1072px; height: 579px; background: #fff; border: 1px solid #000; border-right-width: 2px; border-bottom: 0; padding: 41px 0 0 44px; font: 9.5px/12px "Liberation Sans", Arial, sans-serif; letter-spacing: 0; }
.phead { display: flex; justify-content: space-between; width: 979px; padding: 0 1px 0 3px; line-height: 14px; height: 28px; }
.w1 { letter-spacing: .4px; }
.ra { text-align: right; }
.page h1 { margin: 0; font-size: 12px; line-height: 24px; height: 22px; width: 979px; text-align: center; letter-spacing: .75px; }
.info { margin-left: 156px; width: 642px; height: 66px; display: grid; grid-template: 32px 33px / 193px 149px 150px 149px; border: 1px solid #000; border-width: 1px 0 0 1px; text-align: center; }
.info > div { border: 1px solid #000; border-width: 0 1px 1px 0; display: flex; flex-direction: column; }
.info span { height: 16px; line-height: 14px; }
.info span + span { line-height: 17px; }
.info .plan { grid-column: 1 / -1; }
.info .plan span { letter-spacing: .3px; }
.info .plan span + span { line-height: 14px; }
.info .code { letter-spacing: .4px; }
.period { display: flex; gap: 19px; justify-content: center; letter-spacing: .45px; padding-right: 10px; }
.wide { letter-spacing: .6px; }
.grid { margin-top: 5px; width: 980px; border: 1px solid #000; border-width: 1px 0 0 1px; display: grid; grid-template-columns: 32px 220px 121px 60px 65px 221px 115px 53px 92px; grid-template-rows: 27px 27px 16px 17px 16px 17px 16px 17px 16px 17px 16px 17px 16px 17px; text-align: center; }
.grid > div { border: 1px solid #000; border-width: 0 1px 1px 0; display: flex; align-items: center; justify-content: center; white-space: nowrap; }
.grid .r2 { grid-row: span 2; }
.grid .c2 { grid-column: span 2; }
.grid .c4 { grid-column: span 4; }
.grid .c4b { grid-column: span 4; }
.grid .c8 { grid-column: span 8; }
.grid .all { grid-column: 1 / -1; }
.grid .lf { justify-content: flex-start; padding-left: 1px; text-align: left; letter-spacing: -.14px; }
.grid .rt { justify-content: flex-end; padding-right: 2px; }
.grid .batch { align-items: flex-start; letter-spacing: -.27px; }
.grid .nm { letter-spacing: .4px; }
.grid .ng { letter-spacing: .54px; }
.grid .grade { letter-spacing: -.15px; }
.grid .mat { line-height: 11px; }
.grid .need { flex-direction: column; justify-content: space-between; padding: 0 3px 2px 0; }
.need span { align-self: flex-end; }
.need em { margin-left: 2px; }
.grid .tot { letter-spacing: .09px; }
.pscroll { width: 13px; margin-top: 1px; display: flex; flex-direction: column; background: #ebe9ed; }
.cbtn { height: 17px; flex: none; background: #ebe9ed; border: 1px solid #fff; border-right: 0; border-bottom: 2px solid #88868a; display: flex; align-items: center; justify-content: center; }
.cbtn::after { margin-left: 2px; }
.dup::after { width: 7px; height: 8px; background: #000; clip-path: polygon(50% 0, 100% 40%, 60% 40%, 60% 57%, 100% 100%, 0 100%, 40% 57%, 40% 40%, 0 40%); }
.ddown::after { width: 7px; height: 8px; background: #000; clip-path: polygon(0 0, 100% 0, 60% 43%, 60% 60%, 100% 60%, 50% 100%, 0 60%, 40% 60%, 40% 43%); }
.pstatus { height: 20px; border-top: 1px solid #d8d6da; display: flex; padding-top: 1px; background: #ebe9ed; padding-left: 2px; }
.pg { width: 76px; height: 17px; border-top: 1px solid #9d9ba0; border-left: 1px solid #9d9ba0; border-right: 1px solid #fff; border-bottom: 1px solid #fff; margin-right: 2px; padding-left: 1px; letter-spacing: .1px; line-height: 18px; }
.rbtn { width: 18px; height: 17px; background: #ebe9ed; border: 1px solid #fff; border-right: 2px solid #9d9ba0; border-bottom: 2px solid #9d9ba0; display: flex; align-items: center; justify-content: center; }
.rbtn.left::after { border-right-color: #a09ea2; }
.rbtn.right::after { border-left-color: #a09ea2; }
.pstatus .track { border-top: 1px solid #a09ea2; }
.endcap { width: 12px; }
.rtabs { height: 25px; border-top: 2px solid #c3cfe6; border-bottom: 1px solid #3a62a4; border-left: 1px solid #3a62a4; background: linear-gradient(#3a62a4 0 1px, #fcfcfd 1px, #ebe9ed); display: flex; }
.rt1 { width: 111px; padding: 3px 0 0 8px; line-height: 17px; letter-spacing: 0; white-space: nowrap; }
.rt2 { width: 219px; height: 20px; background: #c3cfe6; border: 1px solid #3a62a4; border-top: 0; display: flex; align-items: center; padding: 2px 0 0 3px; white-space: nowrap; letter-spacing: -.14px; }
.close { width: 16px; height: 15px; margin-left: auto; margin-right: 1px; }
.status { display: flex; gap: 2px; margin: 5px 0 0 2px; }
.status span { height: 18px; border: 1px solid #a5a3a7; padding-left: 2px; line-height: 17px; letter-spacing: -.08px; }
.s1 { width: 129px; } .s2 { width: 52px; } .s3 { flex: 1; border-right: 0 !important; }

.taskbar { display: flex; align-items: center; height: 27px; white-space: nowrap; letter-spacing: -.06px; overflow: hidden; }
.task { display: flex; align-items: center; height: 22px; border-right: 1px solid #a5a3a7; }
.task .ic { margin-right: 3px; }
.k1 { width: 90px; letter-spacing: -.2px; } .k1 .ic { margin-left: -3px; margin-right: 0; }
.k2 { width: 202px; padding-left: 5px; }
.k3 { width: 55px; padding-left: 6px; }
.k4 { width: 130px; padding-left: 5px; letter-spacing: -.1px; }
.k5 { width: 217px; margin-left: 2px; padding-left: 3px; border: 1px solid #3a62a4; background: #d9dce4; letter-spacing: -.17px; }
.k5 .ic { margin-right: 2px; }
```
